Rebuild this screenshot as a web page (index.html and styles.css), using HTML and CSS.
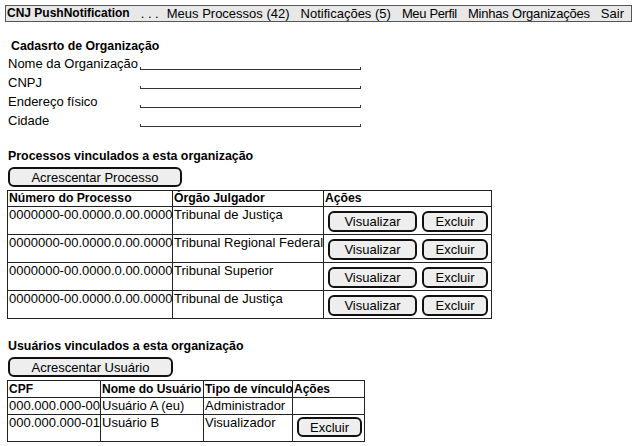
FILE: index.html
```html
<!DOCTYPE html>
<html lang="pt">
<head>
<meta charset="utf-8">
<title>CNJ PushNotification</title>
<link rel="stylesheet" href="styles.css">
</head>
<body>
<nav class="nav">
  <span class="brand">CNJ PushNotification</span>
  <span class="dots">. . .</span>
  <span>Meus Processos (42)</span>
  <span>Notificações (5)</span>
  <span class="tight">Meu Perfil</span>
  <span class="tighter">Minhas Organizações</span>
  <span>Sair</span>
</nav>

<section class="form">
  <h2 class="form-title">Cadasrto de Organização</h2>
  <div class="form-row"><span class="label">Nome da Organização</span><span class="field"></span></div>
  <div class="form-row"><span class="label">CNPJ</span><span class="field"></span></div>
  <div class="form-row"><span class="label">Endereço físico</span><span class="field"></span></div>
  <div class="form-row"><span class="label">Cidade</span><span class="field"></span></div>
</section>

<section class="block block-proc">
  <h2 class="title">Processos vinculados a esta organização</h2>
  <button class="btn btn-add-proc">Acrescentar Processo</button>
  <table class="grid grid-proc">
    <colgroup><col class="c-num"><col class="c-org"><col class="c-act"></colgroup>
    <tr><th>Número do Processo</th><th>Órgão Julgador</th><th>Ações</th></tr>
    <tr><td>0000000-00.0000.0.00.0000</td><td>Tribunal de Justiça</td><td><div class="actions"><button class="btn btn-view">Visualizar</button><button class="btn btn-del">Excluir</button></div></td></tr>
    <tr><td>0000000-00.0000.0.00.0000</td><td>Tribunal Regional Federal</td><td><div class="actions"><button class="btn btn-view">Visualizar</button><button class="btn btn-del">Excluir</button></div></td></tr>
    <tr><td>0000000-00.0000.0.00.0000</td><td>Tribunal Superior</td><td><div class="actions"><button class="btn btn-view">Visualizar</button><button class="btn btn-del">Excluir</button></div></td></tr>
    <tr><td>0000000-00.0000.0.00.0000</td><td>Tribunal de Justiça</td><td><div class="actions"><button class="btn btn-view">Visualizar</button><button class="btn btn-del">Excluir</button></div></td></tr>
  </table>
</section>

<section class="block block-users">
  <h2 class="title">Usuários vinculados a esta organização</h2>
  <button class="btn btn-add-user">Acrescentar Usuário</button>
  <table class="grid grid-users">
    <colgroup><col class="c-cpf"><col class="c-name"><col class="c-type"><col class="c-uact"></colgroup>
    <tr><th>CPF</th><th>Nome do Usuário</th><th>Tipo de vínculo</th><th>Ações</th></tr>
    <tr><td>000.000.000-00</td><td>Usuário A (eu)</td><td>Administrador</td><td></td></tr>
    <tr><td>000.000.000-01</td><td>Usuário B</td><td>Visualizador</td><td><div class="actions actions-user"><button class="btn btn-del btn-del-user">Excluir</button></div></td></tr>
  </table>
</section>
</body>
</html>
```

FILE: styles.css
```css
html, body {
  margin: 0;
  padding: 0;
  background: #ffffff;
}
body {
  font-family: "Liberation Sans", Arial, sans-serif;
  font-size: 13px;
  color: #000;
  line-height: 15px;
}

.nav {
  margin: 5px 0 0 5px;
  width: 623px;
  height: 15px;
  padding: 0 1px;
  display: flex;
  align-items: center;
  gap: 11px;
  background: #e8e8e8;
  border: 1px solid #555;
  white-space: nowrap;
  overflow: hidden;
}
.brand { font-weight: bold; font-size: 12px; }
.dots { margin-right: -3px; }
.tight { letter-spacing: -0.35px; }
.tighter { letter-spacing: -0.2px; }

.form {
  margin-top: 17px;
}
.form-title {
  margin: 0 0 0 11px;
  font-size: 12.3px;
  font-weight: bold;
  line-height: 15px;
}
.form-row {
  display: grid;
  grid-template-columns: 132px 221px;
  height: 19px;
  align-items: center;
  padding-left: 8px;
}
.field {
  align-self: end;
  height: 2px;
  margin-bottom: 3px;
  border: 1px solid #333;
  border-top: none;
}

.block {
  padding-left: 8px;
}
.block-proc { margin-top: 19px; }
.block-users { margin-top: 20px; }
.title {
  margin: 0;
  font-size: 12.4px;
  font-weight: bold;
  line-height: 15px;
}

.btn {
  font-family: "Liberation Sans", Arial, sans-serif;
  font-size: 13px;
  color: #000;
  background: #eeeeee;
  border: 2px solid #111;
  border-radius: 6px;
  padding: 0;
  margin: 0;
  line-height: 15px;
  display: block;
}
.btn-add-proc {
  width: 174px;
  height: 20px;
  margin-top: 3px;
}
.btn-add-user {
  width: 165px;
  height: 20px;
  margin-top: 3px;
}
.btn-view {
  width: 89px;
  height: 21px;
}
.btn-del {
  width: 66px;
  height: 21px;
}
.btn-del-user { width: 65px; height: 20px; }

.grid {
  border-collapse: collapse;
  table-layout: fixed;
  margin: 3px 0 0 -1px;
}
.grid-proc { width: 484px; }
.grid-users { width: 357px; }
.grid th, .grid td {
  border: 1px solid #222;
  padding: 0 0 0 1px;
  text-align: left;
  vertical-align: top;
  white-space: nowrap;
  line-height: 15px;
}
.grid th { font-weight: bold; font-size: 12.2px; }
.grid-users th { font-size: 12px; }
.actions {
  display: flex;
  gap: 5px;
  margin: 4px 0 2px 3px;
}
.actions-user { margin: 2px 0 4px 3px; }
.grid-users th, .grid-users td { line-height: 16px; }

.c-num { width: 165px; }
.c-org { width: 151px; }
.c-act { width: 168px; }
.c-cpf { width: 93px; }
.c-name { width: 103px; }
.c-type { width: 89px; }
.c-uact { width: 72px; }
```
